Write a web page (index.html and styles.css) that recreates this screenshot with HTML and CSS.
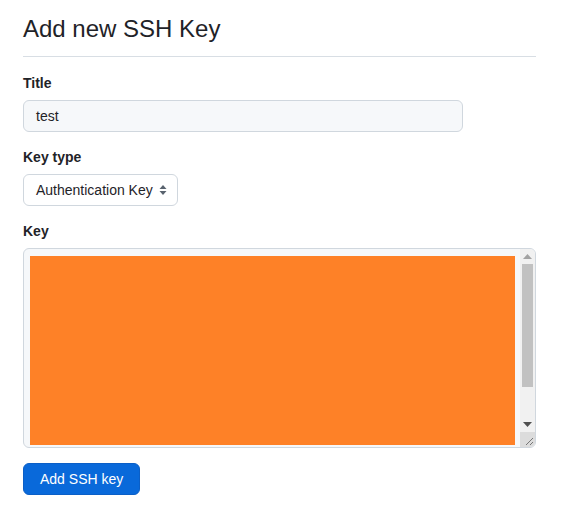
FILE: index.html
```html
<!DOCTYPE html>
<html>
<head>
<meta charset="utf-8">
<link rel="stylesheet" href="styles.css">
</head>
<body>
<div class="page">
  <h2 class="heading">Add new SSH Key</h2>
  <div class="group first">
    <label class="label">Title</label>
    <div class="input">test</div>
  </div>
  <div class="group">
    <label class="label">Key type</label>
    <div class="select">
      <span>Authentication Key</span>
      <svg class="caret" width="8" height="12" viewBox="0 0 8 12"><path d="M4 1 L7.5 5 H0.5 Z M4 11 L7.5 7 H0.5 Z" fill="#59636e"/></svg>
    </div>
  </div>
  <div class="group">
    <label class="label">Key</label>
    <div class="keybox">
      <div class="keycontent"><div class="redact"></div></div>
      <div class="scrollbar">
        <div class="sb-btn"><svg width="9" height="5" viewBox="0 0 9 5"><path d="M4.5 0 L9 5 H0 Z" fill="#a3a3a3"/></svg></div>
        <div class="sb-thumb"></div>
        <div class="sb-space"></div>
        <div class="sb-btn"><svg width="9" height="5" viewBox="0 0 9 5"><path d="M0 0 H9 L4.5 5 Z" fill="#505050"/></svg></div>
        <div class="sb-resize"><svg width="15" height="15" viewBox="0 0 15 15"><path d="M13 6 L6 13 M13 10 L10 13" stroke="#777" stroke-width="1"/></svg></div>
      </div>
    </div>
  </div>
  <div class="group">
    <button class="btn">Add SSH key</button>
  </div>
</div>
</body>
</html>
```
FILE: styles.css
```css
html, body {
  margin: 0;
  padding: 0;
  background: #ffffff;
}
body {
  font-family: "Liberation Sans", Arial, sans-serif;
  color: #1f2328;
  font-size: 14px;
}
.page {
  width: 513px;
  padding: 14px 27px 0 23px;
}
.heading {
  margin: 0;
  font-size: 24px;
  font-weight: 400;
  line-height: 30px;
  padding-bottom: 12px;
  border-bottom: 1px solid #d8dee4;
}
.group {
  margin-top: 15px;
  display: flex;
  flex-direction: column;
  align-items: flex-start;
}
.group.first {
  margin-top: 16px;
}
.label {
  font-weight: 700;
  font-size: 14px;
  line-height: 21px;
  margin-bottom: 6px;
}
.input {
  box-sizing: border-box;
  width: 440px;
  height: 32px;
  border: 1px solid #d0d7de;
  border-radius: 6px;
  background: #f6f8fa;
  padding: 0 12px;
  line-height: 30px;
  font-size: 14px;
}
.select {
  box-sizing: border-box;
  width: 155px;
  height: 32px;
  border: 1px solid #d0d7de;
  border-radius: 6px;
  background: #ffffff;
  padding: 0 10px 0 12px;
  display: flex;
  align-items: center;
  justify-content: space-between;
  font-size: 14px;
  white-space: nowrap;
}
.caret {
  display: block;
}
.keybox {
  box-sizing: border-box;
  width: 513px;
  height: 200px;
  border: 1px solid #d0d7de;
  border-radius: 6px;
  background: #f6f8fa;
  display: flex;
  overflow: hidden;
}
.keycontent {
  flex: 1;
  padding: 7px 5px 2px 6px;
  display: flex;
}
.redact {
  flex: 1;
  background: #fe8127;
}
.scrollbar {
  width: 15px;
  background: #f1f1f1;
  display: flex;
  flex-direction: column;
}
.sb-btn {
  height: 15px;
  display: flex;
  align-items: center;
  justify-content: center;
}
.sb-thumb {
  height: 123px;
  margin: 0 2px;
  background: #c1c1c1;
}
.sb-space {
  flex: 1;
}
.sb-resize {
  height: 15px;
  background: #dcdcdc;
}
.sb-resize svg {
  display: block;
}
.btn {
  box-sizing: border-box;
  height: 32px;
  border: 1px solid #0b5fc7;
  border-radius: 6px;
  background: #0969da;
  color: #ffffff;
  font-family: "Liberation Sans", Arial, sans-serif;
  font-size: 14px;
  padding: 0 16px;
  white-space: nowrap;
}
```
